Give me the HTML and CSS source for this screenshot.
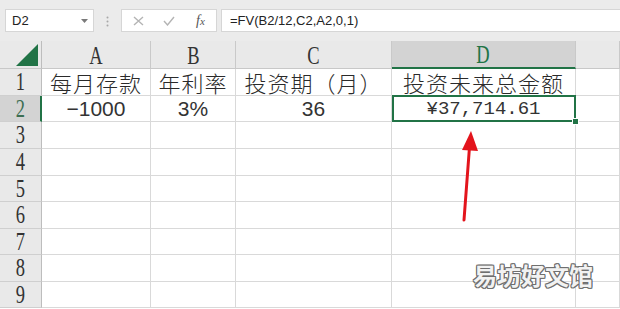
FILE: index.html
```html
<!DOCTYPE html>
<html lang="zh-CN">
<head>
  <meta charset="UTF-8" />
  <title>FV</title>
  <link rel="stylesheet" href="styles.css">
</head>
<body>
  <div class="toolbar">
    <div class="namebox">
      <span>D2</span>
      <svg class="caret" width="7" height="4" viewBox="0 0 7 4"><polygon points="0,0 7,0 3.5,4" fill="#7a7a7a"/></svg>
    </div>
    <svg class="dots" width="3" height="11" viewBox="0 0 3 11">
      <circle cx="1.5" cy="1.5" r="1" fill="#a8a8a8"/>
      <circle cx="1.5" cy="5.5" r="1" fill="#a8a8a8"/>
      <circle cx="1.5" cy="9.5" r="1" fill="#a8a8a8"/>
    </svg>
    <div class="fxbox">
      <svg width="11" height="10" viewBox="0 0 11 10"><path d="M1 1 L10 9 M10 1 L1 9" stroke="#b4b4b4" stroke-width="1.4" fill="none"/></svg>
      <svg width="12" height="10" viewBox="0 0 12 10"><path d="M1 5 L4.5 9 L11 1" stroke="#b4b4b4" stroke-width="1.4" fill="none"/></svg>
      <span class="fx">f<span>x</span></span>
    </div>
    <div class="formula">=FV(B2/12,C2,A2,0,1)</div>
  </div>

  <div class="sheet">
    <div class="grid">
      <div class="corner">
        <svg width="22" height="22" viewBox="0 0 22 22"><polygon points="22,0 22,22 0,22" fill="#217346"/></svg>
      </div>
      <div class="colhead"><span>A</span></div>
      <div class="colhead"><span>B</span></div>
      <div class="colhead"><span>C</span></div>
      <div class="colhead active"><span>D</span></div>
      <div class="colhead"></div>

      <div class="rowhead"><span>1</span></div>
      <div class="cell cjk">每月存款</div>
      <div class="cell cjk">年利率</div>
      <div class="cell cjk">投资期（月）</div>
      <div class="cell cjk">投资未来总金额</div>
      <div class="cell"></div>

      <div class="rowhead active"><span>2</span></div>
      <div class="cell num">−1000</div>
      <div class="cell num">3%</div>
      <div class="cell num">36</div>
      <div class="cell money selected">¥37,714.61<i class="handle"></i></div>
      <div class="cell"></div>

      <div class="rowhead"><span>3</span></div><div class="cell"></div><div class="cell"></div><div class="cell"></div><div class="cell"></div><div class="cell"></div>
      <div class="rowhead"><span>4</span></div><div class="cell"></div><div class="cell"></div><div class="cell"></div><div class="cell"></div><div class="cell"></div>
      <div class="rowhead"><span>5</span></div><div class="cell"></div><div class="cell"></div><div class="cell"></div><div class="cell"></div><div class="cell"></div>
      <div class="rowhead"><span>6</span></div><div class="cell"></div><div class="cell"></div><div class="cell"></div><div class="cell"></div><div class="cell"></div>
      <div class="rowhead"><span>7</span></div><div class="cell"></div><div class="cell"></div><div class="cell"></div><div class="cell"></div><div class="cell"></div>
      <div class="rowhead"><span>8</span></div><div class="cell"></div><div class="cell"></div><div class="cell"></div><div class="cell"></div><div class="cell"></div>
      <div class="rowhead"><span>9</span></div><div class="cell"></div><div class="cell"></div><div class="cell"></div><div class="cell"></div><div class="cell"></div>
    </div>

    <svg class="arrow" width="35" height="100" viewBox="0 0 35 100">
      <line x1="14" y1="95" x2="19.5" y2="22" stroke="#e3141c" stroke-width="3" stroke-linecap="round"/>
      <polygon points="21,6 12,25 28,26" fill="#e3141c"/>
    </svg>
    <div class="watermark">易坊好文馆</div>
  </div>
</body>
</html>
```

FILE: styles.css
```css
body {
  margin: 0;
  width: 620px;
  height: 309px;
  overflow: hidden;
  background: #ffffff;
  font-family: "Noto Sans CJK SC", sans-serif;
  color: #333;
}
.toolbar {
  height: 41px;
  box-sizing: border-box;
  padding-top: 9px;
  background: #ebebeb;
  display: flex;
  align-items: flex-start;
}
.namebox {
  margin-left: 5px;
  width: 89px;
  height: 23px;
  box-sizing: border-box;
  background: #fff;
  border: 1px solid #d6d6d6;
  display: flex;
  align-items: center;
  justify-content: space-between;
  padding: 0 5px 0 6px;
  font-family: "Liberation Sans", sans-serif;
  font-size: 13px;
  color: #222;
}
.dots {
  margin: 7px 12px 0 12px;
}
.fxbox {
  width: 96px;
  height: 23px;
  box-sizing: border-box;
  background: #fff;
  border: 1px solid #d6d6d6;
  display: flex;
  align-items: center;
  gap: 19px;
  padding-left: 11px;
}
.fx {
  font-family: "Liberation Serif", serif;
  font-style: italic;
  font-size: 14px;
  color: #555;
  margin-left: 2px;
}
.fx span {
  font-size: 11px;
}
.formula {
  margin-left: 4px;
  flex: 1;
  height: 23px;
  box-sizing: border-box;
  background: #fff;
  border: 1px solid #d6d6d6;
  border-right: none;
  padding-left: 8px;
  font-family: "Liberation Sans", sans-serif;
  font-size: 13px;
  line-height: 21px;
  color: #222;
}
.sheet {
  position: relative;
}
.grid {
  display: grid;
  grid-template-columns: 42px 109px 85px 156px 184px 1fr;
  grid-template-rows: 28px 27px 26px 27px 27px 26px 27px 26px 27px 26px;
}
.corner, .colhead, .rowhead {
  background: #e9e9e9;
  box-sizing: border-box;
  font-family: "Liberation Serif", serif;
  font-size: 25px;
  color: #333;
  display: flex;
  align-items: center;
  justify-content: center;
}
.colhead span, .rowhead span {
  display: inline-block;
  transform: scaleX(0.74);
}
.corner {
  border-right: 1px solid #bdbdbd;
  border-bottom: 1px solid #c8c8c8;
  align-items: flex-end;
  justify-content: flex-end;
  padding: 0 3px 2px 0;
}
.corner svg {
  display: block;
}
.colhead {
  border-right: 1px solid #c9c9c9;
  border-bottom: 1px solid #c8c8c8;
  padding-top: 2px;
}
.colhead.active {
  background: #d3d3d3;
  color: #217346;
  border-bottom: 2px solid #217346;
}
.rowhead {
  border-right: 1px solid #bdbdbd;
  border-bottom: 1px solid #cfcfcf;
}
.rowhead.active {
  background: #d3d3d3;
  color: #3d6e52;
  border-right: 2px solid #217346;
}
.cell {
  box-sizing: border-box;
  border-right: 1px solid #d9d9d9;
  border-bottom: 1px solid #d9d9d9;
  display: flex;
  align-items: center;
  justify-content: center;
  font-size: 22px;
  color: #2a2a2a;
}
.cjk {
  font-weight: 300;
  letter-spacing: 1px;
}
.num {
  font-family: "Liberation Sans", sans-serif;
  font-size: 21px;
  color: #333;
}
.money {
  font-family: "Liberation Mono", monospace;
  font-size: 19px;
  color: #333;
}
.selected {
  position: relative;
}
.selected::after {
  content: "";
  position: absolute;
  top: -1px;
  left: 0;
  right: -1px;
  bottom: -1px;
  border: 2px solid #217346;
}
.handle {
  position: absolute;
  right: -4px;
  bottom: -4px;
  width: 5px;
  height: 5px;
  background: #217346;
  border: 1px solid #fff;
  z-index: 2;
}
.arrow {
  position: absolute;
  left: 450px;
  top: 84px;
}
.watermark {
  position: absolute;
  left: 473px;
  top: 222px;
  font-size: 24px;
  line-height: 1;
  font-weight: 700;
  color: #f2f2f2;
  text-shadow: 1px 0 #6f6f6f, -1px 0 #6f6f6f, 0 1px #6f6f6f, 0 -1px #6f6f6f,
    1px 1px #6f6f6f, -1px -1px #6f6f6f, 1px -1px #6f6f6f, -1px 1px #6f6f6f;
}
```
